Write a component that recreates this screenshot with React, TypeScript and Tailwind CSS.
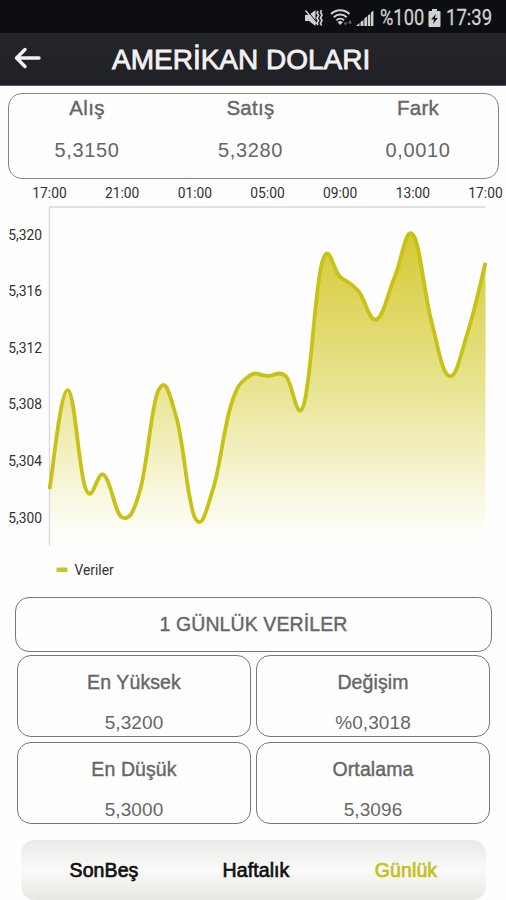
import { clsx } from 'clsx';

interface Istatistik {
  baslik: string;
  deger: string;
}

const KURLAR: Istatistik[] = [
  { baslik: 'Alış', deger: '5,3150' },
  { baslik: 'Satış', deger: '5,3280' },
  { baslik: 'Fark', deger: '0,0010' },
];

const ISTATISTIKLER: Istatistik[] = [
  { baslik: 'En Yüksek', deger: '5,3200' },
  { baslik: 'Değişim', deger: '%0,3018' },
  { baslik: 'En Düşük', deger: '5,3000' },
  { baslik: 'Ortalama', deger: '5,3096' },
];

const SEKMELER = ['SonBeş', 'Haftalık', 'Günlük'];

const SAATLER = ['17:00', '21:00', '01:00', '05:00', '09:00', '13:00', '17:00'];
const SEVIYELER = [5.32, 5.316, 5.312, 5.308, 5.304, 5.3];

// hourly rates
const VERILER = [
  5.302, 5.309, 5.302, 5.303, 5.3, 5.302, 5.309, 5.307, 5.3, 5.302, 5.308, 5.31, 5.31, 5.31, 5.308, 5.318, 5.317,
  5.316, 5.314, 5.317, 5.32, 5.314, 5.31, 5.313, 5.318,
];

const SOL = 49.5;
const SAG = 485.5;
const UST = 29;
const ALT = 367;

const getX = (i: number) => SOL + ((SAG - SOL) * i) / (VERILER.length - 1);
const getY = (v: number) => 338.5 - (v - 5.3) * 14150;

const getEgri = () => {
  const p = VERILER.map((v, i) => ({ x: getX(i), y: getY(v) }));
  const k = 0.2;
  let d = `M${p[0].x} ${p[0].y}`;
  for (let i = 1; i < p.length; i++) {
    const onceki = p[Math.max(i - 2, 0)];
    const a = p[i - 1];
    const b = p[i];
    const sonraki = p[Math.min(i + 1, p.length - 1)];
    d += ` C${a.x + (b.x - onceki.x) * k} ${a.y + (b.y - onceki.y) * k} ${b.x - (sonraki.x - a.x) * k} ${
      b.y - (sonraki.y - a.y) * k
    } ${b.x} ${b.y}`;
  }
  return d;
};

function DurumCubugu() {
  return (
    <div className="flex h-[33px] items-center bg-[#0d0e11] pl-[304px] pt-[3px] text-[#d0d0d0]">
      {/* Sessiz */}
      <svg width="20" height="18" viewBox="0 0 20 18" fill="none" stroke="currentColor">
        <path d="M1 6h4l6.5-5v16L5 12H1z" fill="currentColor" stroke="none" />
        <path d="M3 1.2l10 12.5" stroke="#0d0e11" strokeWidth="1" />
        <path d="M1.5 1.5l11 13.5" strokeWidth="1.4" />
        <path d="M14 2l-1 2 1.5 2.5-1.5 2.5 1.5 2.5-1.5 2.5 1 2M17.5 1l-1 2.5 1.5 2.5-1.5 3 1.5 2.5-1.5 2.5 1 2.5" strokeWidth="1.7" />
      </svg>
      {/* Wifi */}
      <svg className="ml-[6px]" width="24" height="18" viewBox="0 0 24 18" fill="none" stroke="currentColor" strokeWidth="2">
        <path d="M1 5a13 13 0 0 1 18.5 0M3.8 8.2a9 9 0 0 1 12.9 0M6.5 11.2a5.4 5.4 0 0 1 7.5 0" />
        <path d="M10.2 16l-2.6-2.7a3.8 3.8 0 0 1 5.2 0z" fill="currentColor" stroke="none" />
        <path d="M13.5 13.5h4l-2 3zM18 14.5l2-3.5 2 3.5z" fill="#66676a" stroke="none" />
      </svg>
      <svg className="ml-[2px]" width="18" height="18" viewBox="0 0 18 18" fill="currentColor">
        <path d="M0 17l3.5-3v3zM4.5 13l3-2v6h-3zM8.3 9.5L11 7.5V17H8.3z" />
        <path d="M11.8 6.5l2.4-1.5v12h-2.4zM14.9 3.5L17.4 1.5V17h-2.5z" />
      </svg>
      <div className="ml-[6px] w-[44px]">
        <span className="block w-max origin-left scale-x-[0.83] font-['Roboto',sans-serif] text-[22px] leading-6 [-webkit-text-stroke:0.3px]">
          %100
        </span>
      </div>
      {/* Batarya */}
      <svg className="ml-[4px]" width="13" height="18" viewBox="0 0 13 18">
        <path d="M4 0h5v2h2.5a1 1 0 0 1 1 1v14a1 1 0 0 1-1 1h-10a1 1 0 0 1-1-1V3a1 1 0 0 1 1-1H4z" fill="currentColor" />
        <path d="M7.8 5L3.2 10.5h2.9l-1 4.5 4.7-6H7z" fill="#0d0e11" />
      </svg>
      <div className="ml-[5px] w-[46px]">
        <span className="block w-max origin-left scale-x-[0.84] font-['Roboto',sans-serif] text-[22px] leading-6 [-webkit-text-stroke:0.3px]">
          17:39
        </span>
      </div>
    </div>
  );
}

function Grafik() {
  const egri = getEgri();

  return (
    <svg className="block" width="506" height="418" viewBox="0 0 506 418" fontFamily="Roboto, sans-serif" fontSize="13.8" fill="#303030">
      <defs>
        <linearGradient id="dolgu" gradientUnits="userSpaceOnUse" x1="0" y1={UST} x2="0" y2={ALT}>
          <stop offset="0" stopColor="#cdc41b" />
          <stop offset="0.08" stopColor="#d5ca35" />
          <stop offset="0.5" stopColor="#e7e28b" />
          <stop offset="0.96" stopColor="#fefefa" />
          <stop offset="1" stopColor="#ffffff" />
        </linearGradient>
      </defs>
      {SAATLER.map((saat, i) => (
        <text key={i} x={getX(i * 4)} y="19" textAnchor="middle">
          {saat}
        </text>
      ))}
      {SEVIYELER.map((s) => (
        <text key={s} x="42" y={getY(s) + 5} textAnchor="end">
          {s.toFixed(3).replace('.', ',')}
        </text>
      ))}
      <path d={`${egri} V${ALT} H${SOL} Z`} fill="url(#dolgu)" />
      <path d={`M${SOL} ${ALT}V${UST - 1}H${SAG}`} fill="none" stroke="#d8d8d8" strokeWidth="1.3" />
      <path d={egri} fill="none" stroke="#c8c216" strokeWidth="3.8" />
      <rect x="56.5" y="388.5" width="11" height="4.5" rx="1" fill="#cbc423" />
      <text x="74.5" y="396" fontSize="13.8">
        Veriler
      </text>
    </svg>
  );
}

export default function App() {
  const aktif = 'Günlük';

  return (
    <div className="h-[900px] w-[506px] overflow-hidden bg-[#fefefe] font-['Liberation_Sans',Arial,sans-serif] text-[#666666]">
      <DurumCubugu />

      <header className="flex h-[53px] items-center border-b border-[#55555a] bg-linear-to-b from-[#242529] to-[#202126] pl-[14px] text-[#f2f2f2]">
        <svg className="-mt-[2px]" width="27" height="22" viewBox="0 0 27 22" fill="none" stroke="currentColor" strokeWidth="3.4" strokeLinecap="round" strokeLinejoin="round">
          <path d="M25 11H2.5M11 2.5L2.5 11l8.5 8.5" />
        </svg>
        <h1 className="ml-[71px] mt-[2px] whitespace-nowrap text-[28px] leading-none [-webkit-text-stroke:0.8px]">AMERİKAN DOLARI</h1>
      </header>

      {/* Kurlar */}
      <section className="ml-[8px] mt-[7px] grid h-[86px] w-[491px] grid-cols-[156px_171px_164px] rounded-[14px] border border-[#858585]">
        {KURLAR.map((k) => (
          <div key={k.baslik} className="text-center">
            <p className="mt-[2px] text-[20.5px] leading-6 tracking-[0.3px] [-webkit-text-stroke:0.4px]">{k.baslik}</p>
            <p className="mt-[18px] text-[20px] leading-6 tracking-[0.6px]">{k.deger}</p>
          </div>
        ))}
      </section>

      <Grafik />

      <h2 className="ml-[15px] flex h-[55px] w-[477px] items-center justify-center rounded-[14px] border border-[#777777] text-[19.5px] tracking-[0.1px] [-webkit-text-stroke:0.4px]">
        1 GÜNLÜK VERİLER
      </h2>

      {/* Istatistikler */}
      <section className="ml-[17px] mt-[3px] grid w-[473px] grid-cols-2 gap-x-[5px] gap-y-[5px]">
        {ISTATISTIKLER.map((s) => (
          <div key={s.baslik} className="h-[82px] rounded-[14px] border border-[#777777] text-center">
            <p className="mt-[14px] text-[19.5px] leading-6 tracking-[0.1px] [-webkit-text-stroke:0.4px]">{s.baslik}</p>
            <p className="mt-[17px] text-[19px] leading-6 tracking-[0.1px]">{s.deger}</p>
          </div>
        ))}
      </section>

      <nav className="ml-[21px] mt-[16px] grid h-[60px] w-[465px] grid-cols-[166px_138px_162px] items-center rounded-[14px] bg-linear-to-b from-[#e9e9e6] via-[#fafafa] to-[#e7e7e2] text-center">
        {SEKMELER.map((s) => (
          <button
            key={s}
            className={clsx(
              'pt-[1px] text-[19.5px] tracking-[0.1px] [-webkit-text-stroke:0.7px]',
              s === aktif ? 'text-[#c4c01c]' : 'text-[#111111]'
            )}
          >
            {s}
          </button>
        ))}
      </nav>
    </div>
  );
}
